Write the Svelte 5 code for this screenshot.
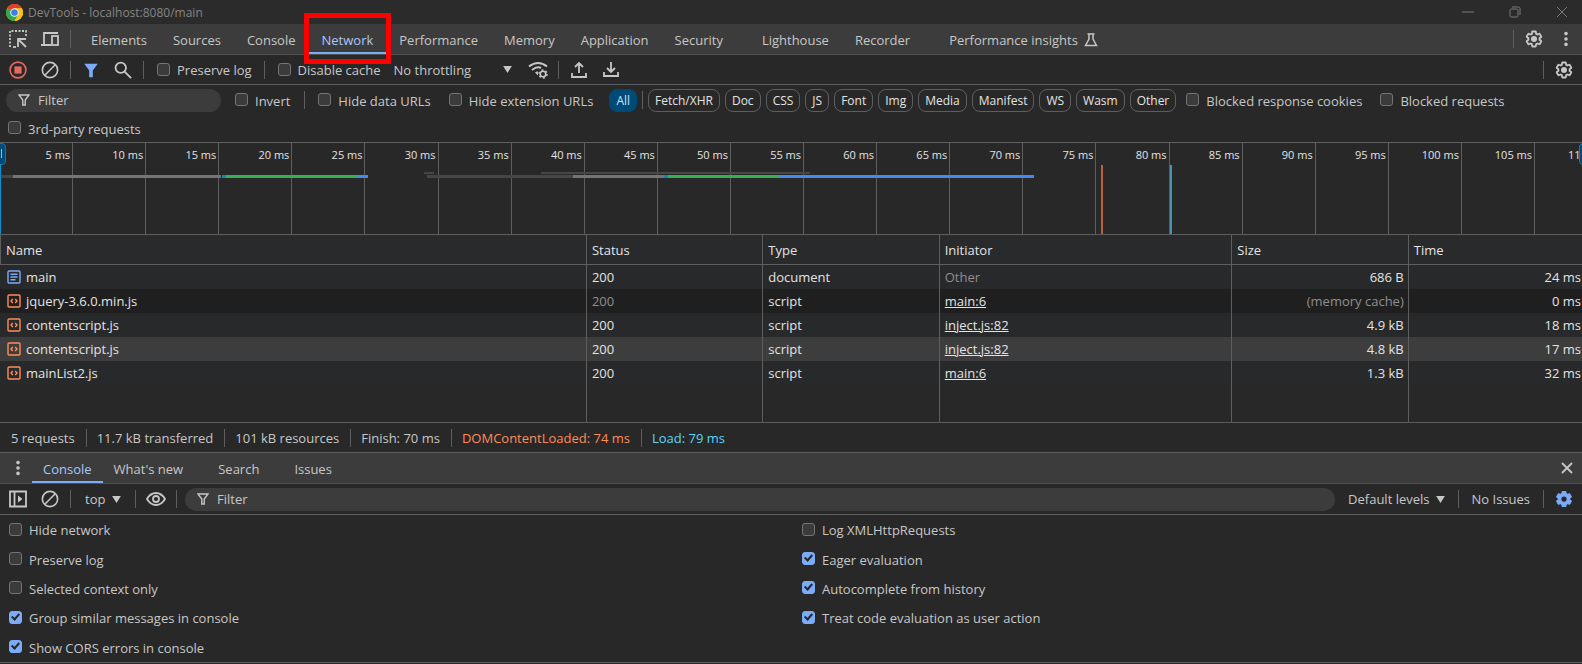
<script lang="ts">
  const tabs = ['Elements', 'Sources', 'Console', 'Network', 'Performance', 'Memory', 'Application', 'Security'];
  const extraTabs = ['Lighthouse', 'Recorder', 'Performance insights'];
  const types = ['Fetch/XHR', 'Doc', 'CSS', 'JS', 'Font', 'Img', 'Media', 'Manifest', 'WS', 'Wasm', 'Other'];
  const drawerTabs = ["What's new", 'Search', 'Issues'];

  let activeTab = $state('Network');
  let activeType = $state('All');
  let selectedRow = $state(3);

  const requests = [
    { name: 'main', status: 200, type: 'document', initiator: 'Other', size: '686 B', time: '24 ms' },
    { name: 'jquery-3.6.0.min.js', status: 200, type: 'script', initiator: 'main:6', size: '(memory cache)', time: '0 ms', cached: true },
    { name: 'contentscript.js', status: 200, type: 'script', initiator: 'inject.js:82', size: '4.9 kB', time: '18 ms' },
    { name: 'contentscript.js', status: 200, type: 'script', initiator: 'inject.js:82', size: '4.8 kB', time: '17 ms' },
    { name: 'mainList2.js', status: 200, type: 'script', initiator: 'main:6', size: '1.3 kB', time: '32 ms' }
  ];

  // Overview timeline, all values in ms
  const visibleSpan = 108.2;
  const ticks = Array.from({ length: 22 }, (_, i) => (i + 1) * 5);
  const bars = [
    { from: 0, to: 0.9, kind: 'queue' },
    { from: 0.9, to: 15.1, kind: 'stalled' },
    { from: 15.15, to: 15.45, kind: 'request' },
    { from: 15.45, to: 24.4, kind: 'waiting' },
    { from: 24.4, to: 25.2, kind: 'download' },
    { from: 29, to: 29.7, kind: 'queue', upper: true },
    { from: 29.2, to: 39.2, kind: 'queue' },
    { from: 37, to: 55.4, kind: 'queue', upper: true },
    { from: 39.2, to: 45.4, kind: 'stalled' },
    { from: 45.4, to: 45.7, kind: 'request' },
    { from: 45.7, to: 53.3, kind: 'waiting' },
    { from: 53.3, to: 70.7, kind: 'download' }
  ];
  const markers = [
    { at: 75.3, kind: 'dom' },
    { at: 80, kind: 'load' }
  ];
  const pct = (ms: number) => (ms / visibleSpan) * 100;

  const leftSettings = [
    { label: 'Hide network', on: false },
    { label: 'Preserve log', on: false },
    { label: 'Selected context only', on: false },
    { label: 'Group similar messages in console', on: true },
    { label: 'Show CORS errors in console', on: true }
  ];
  const rightSettings = [
    { label: 'Log XMLHttpRequests', on: false },
    { label: 'Eager evaluation', on: true },
    { label: 'Autocomplete from history', on: true },
    { label: 'Treat code evaluation as user action', on: true }
  ];

  const gearPath =
    'M19.43 12.98c.04-.32.07-.64.07-.98 0-.34-.03-.66-.07-.98l2.11-1.65c.19-.15.24-.42.12-.64l-2-3.46c-.09-.16-.26-.25-.44-.25-.06 0-.12.01-.17.03l-2.49 1c-.52-.4-1.08-.73-1.69-.98l-.38-2.65C14.46 2.18 14.25 2 14 2h-4c-.25 0-.46.18-.49.42l-.38 2.65c-.61.25-1.17.59-1.69.98l-2.49-1c-.06-.02-.12-.03-.18-.03-.17 0-.34.09-.43.25l-2 3.46c-.13.22-.07.49.12.64l2.11 1.65c-.04.32-.07.65-.07.98 0 .33.03.66.07.98l-2.11 1.65c-.19.15-.24.42-.12.64l2 3.46c.09.16.26.25.44.25.06 0 .12-.01.17-.03l2.49-1c.52.4 1.08.73 1.69.98l.38 2.65c.03.24.24.42.49.42h4c.25 0 .46-.18.49-.42l.38-2.65c.61-.25 1.17-.59 1.69-.98l2.49 1c.06.02.12.03.18.03.17 0 .34-.09.43-.25l2-3.46c.12-.22.07-.49-.12-.64l-2.11-1.65z';
</script>

{#snippet gear()}
  <svg class="icon" viewBox="0 0 24 24">
    <path d={gearPath} fill="none" stroke="currentColor" stroke-width="2.4" />
    <circle cx="12" cy="12" r="4" fill="currentColor" />
  </svg>
{/snippet}

{#snippet dots()}
  <svg class="icon" viewBox="0 0 20 20">
    <g fill="currentColor">
      <circle cx="10" cy="4" r="2" /><circle cx="10" cy="10" r="2" /><circle cx="10" cy="16" r="2" />
    </g>
  </svg>
{/snippet}

{#snippet clearIcon()}
  <svg class="icon" viewBox="0 0 20 20">
    <g fill="none" stroke="currentColor" stroke-width="1.8">
      <circle cx="10" cy="10" r="8.5" /><path d="M4.5 15.5 15.5 4.5" />
    </g>
  </svg>
{/snippet}

{#snippet funnel()}
  <svg class="funnel" viewBox="0 0 12 12">
    <path d="M1 1h10L7.2 6v5H4.8V6z" fill="none" stroke="currentColor" stroke-width="1.4" />
  </svg>
{/snippet}

{#snippet arrow()}
  <svg class="arrow" viewBox="0 0 10 8"><path d="M0 0h10L5 8z" fill="currentColor" /></svg>
{/snippet}

{#snippet check(label: string, on: boolean = false)}
  <label class="check"><input type="checkbox" checked={on} />{label}</label>
{/snippet}

<div class="devtools">
  <header class="titlebar">
    <svg class="logo" viewBox="0 0 48 48">
      <circle cx="24" cy="24" r="24" fill="#fbc116" />
      <path d="M24 24 3.2 12A24 24 0 0 1 44.8 12H24z" fill="#e33b2e" />
      <path d="M3.2 12A24 24 0 0 0 24 48L34.4 30 24 24z" fill="#2da94f" />
      <path d="M44.8 12A24 24 0 0 1 24 48L34.4 30 24 12z" fill="#fbc116" />
      <circle cx="24" cy="24" r="12" fill="#fff" />
      <circle cx="24" cy="24" r="9.5" fill="#3f7de8" />
    </svg>
    <span class="title">DevTools - localhost:8080/main</span>
    <div class="window-controls">
      <button aria-label="Minimize"><svg viewBox="0 0 12 12"><path d="M0 6h12" /></svg></button>
      <button aria-label="Restore">
        <svg viewBox="0 0 12 12"><rect x="1" y="3" width="8" height="8" rx="1.5" /><path d="M3 1h6.5Q11 1 11 2.5V9" /></svg>
      </button>
      <button aria-label="Close"><svg viewBox="0 0 12 12"><path d="m1 1 10 10M11 1 1 11" /></svg></button>
    </div>
  </header>

  <nav class="tabbar">
    <button class="tool" aria-label="Inspect element">
      <svg class="icon" viewBox="0 0 18 18">
        <g fill="none" stroke="currentColor" stroke-width="1.8">
          <path d="M1 17V1h16v6" stroke-dasharray="2 1.5" />
          <path d="M4 17h3" />
          <path d="M9 17V9h8M9 9l8 8" />
        </g>
      </svg>
    </button>
    <button class="tool" aria-label="Toggle device toolbar">
      <svg class="icon wide" viewBox="0 0 20 18">
        <g fill="none" stroke="currentColor" stroke-width="1.8">
          <path d="M18 3H4v11M1 15h10" /><rect x="12" y="6" width="6" height="9" />
        </g>
      </svg>
    </button>
    <span class="divider"></span>
    <div class="tabs">
      {#each tabs as tab}
        <button class="tab" class:active={tab === activeTab} onclick={() => (activeTab = tab)}>
          {tab}
          {#if tab === 'Network'}<span class="highlight"></span>{/if}
        </button>
      {/each}
      {#each extraTabs as tab}
        <button class="tab" class:spaced={tab !== 'Recorder'} class:active={tab === activeTab} onclick={() => (activeTab = tab)}>
          {tab}
          {#if tab === 'Performance insights'}
            <svg class="flask" viewBox="0 0 14 14">
              <path d="M3.5 1h7M5 1v5L1.5 12.5h11L9 6V1" fill="none" stroke="currentColor" stroke-width="1.5" />
            </svg>
          {/if}
        </button>
      {/each}
    </div>
    <span class="divider"></span>
    <button class="tool" aria-label="Settings">{@render gear()}</button>
    <button class="tool" aria-label="More options">{@render dots()}</button>
  </nav>

  <div class="toolbar">
    <button class="tool record" aria-label="Stop recording">
      <svg class="icon" viewBox="0 0 20 20">
        <circle cx="10" cy="10" r="8.8" fill="none" stroke="currentColor" stroke-width="1.8" />
        <rect x="6" y="6" width="8" height="8" fill="currentColor" />
      </svg>
    </button>
    <button class="tool" aria-label="Clear">{@render clearIcon()}</button>
    <span class="divider"></span>
    <button class="tool blue" aria-label="Filter">
      <svg class="icon" viewBox="0 0 20 20"><path d="M2.5 3h15L12 10.5V18H8v-7.5z" fill="currentColor" /></svg>
    </button>
    <button class="tool" aria-label="Search">
      <svg class="icon" viewBox="0 0 20 20">
        <g fill="none" stroke="currentColor" stroke-width="2">
          <circle cx="7.5" cy="7.5" r="5.8" /><path d="m11.5 11.5 7.5 7.5" />
        </g>
      </svg>
    </button>
    <span class="divider"></span>
    {@render check('Preserve log')}
    <span class="divider"></span>
    {@render check('Disable cache')}
    <span class="select throttling">
      <select aria-label="Throttling"><option>No throttling</option></select>
      {@render arrow()}
    </span>
    <button class="tool" aria-label="Network conditions">
      <svg class="icon wide" viewBox="0 0 20 18">
        <g fill="none" stroke="currentColor" stroke-width="2">
          <path d="M1 5.5Q10-1.5 19 5.5M4 9Q9 5 13 7" />
        </g>
        <path d="M7 11.5q1.5-1.5 3-1v4z" fill="currentColor" />
        <circle cx="15" cy="13" r="2.8" fill="none" stroke="currentColor" stroke-width="1.6" />
        <circle cx="15" cy="13" r="4" fill="none" stroke="currentColor" stroke-width="1.4" stroke-dasharray="2 2.19" />
      </svg>
    </button>
    <span class="divider"></span>
    <button class="tool" aria-label="Import HAR">
      <svg class="icon" viewBox="0 0 18 18">
        <path d="M9 12V2M5 6l4-4 4 4M2 12v4h14v-4" fill="none" stroke="currentColor" stroke-width="1.8" />
      </svg>
    </button>
    <button class="tool" aria-label="Export HAR">
      <svg class="icon" viewBox="0 0 18 18">
        <path d="M9 1v10M5 7l4 4 4-4M2 11v4h14v-4" fill="none" stroke="currentColor" stroke-width="1.8" />
      </svg>
    </button>
    <span class="spacer"></span>
    <span class="divider"></span>
    <button class="tool" aria-label="Network settings">{@render gear()}</button>
  </div>

  <div class="filterbar">
    <label class="filter">{@render funnel()}<input type="text" placeholder="Filter" aria-label="Filter requests" /></label>
    {@render check('Invert')}
    <span class="divider"></span>
    {@render check('Hide data URLs')}
    {@render check('Hide extension URLs')}
    <div class="chips">
      <button class="chip" class:on={activeType === 'All'} onclick={() => (activeType = 'All')}>All</button>
      <span class="divider"></span>
      {#each types as type}
        <button class="chip" class:on={activeType === type} onclick={() => (activeType = type)}>{type}</button>
      {/each}
    </div>
    {@render check('Blocked response cookies')}
    {@render check('Blocked requests')}
    {@render check('3rd-party requests')}
  </div>

  <div class="overview">
    {#each ticks as tick}
      <span class="tick" style="width: {pct(5)}%">{tick} ms</span>
    {/each}
    {#each bars as bar}
      <span class="bar {bar.kind}" class:upper={bar.upper} style="left: {pct(bar.from)}%; width: {pct(bar.to - bar.from)}%"></span>
    {/each}
    {#each markers as marker}
      <span class="marker {marker.kind}" style="left: {pct(marker.at)}%"></span>
    {/each}
    <span class="handle left"></span>
    <span class="handle right"></span>
  </div>

  <table>
    <colgroup>
      <col class="c-name" /><col class="c-status" /><col class="c-type" /><col class="c-initiator" /><col class="c-size" /><col />
    </colgroup>
    <thead>
      <tr><th>Name</th><th>Status</th><th>Type</th><th>Initiator</th><th>Size</th><th>Time</th></tr>
    </thead>
    <tbody>
      {#each requests as request, i}
        <tr class:selected={i === selectedRow} onclick={() => (selectedRow = i)}>
          <td>
            <div class="name">
              {#if request.type === 'document'}
                <svg class="file doc" viewBox="0 0 14 14">
                  <rect x="1" y="1" width="12" height="12" rx="1" />
                  <path d="M3.5 4.2h7M3.5 7h7M3.5 9.8h5" />
                </svg>
              {:else}
                <svg class="file script" viewBox="0 0 14 14">
                  <rect x="1" y="1" width="12" height="12" rx="1" />
                  <path d="M5.8 5 4 7l1.8 2M8.2 5 10 7 8.2 9" />
                </svg>
              {/if}
              {request.name}
            </div>
          </td>
          <td class:dim={request.cached}>{request.status}</td>
          <td>{request.type}</td>
          <td class:dim={request.initiator === 'Other'}>
            {#if request.initiator === 'Other'}Other{:else}<a href="#{request.initiator}">{request.initiator}</a>{/if}
          </td>
          <td class="num" class:dim={request.cached}>{request.size}</td>
          <td class="num last">{request.time}</td>
        </tr>
      {/each}
      <tr class="filler"><td></td><td></td><td></td><td></td><td></td><td></td></tr>
    </tbody>
  </table>

  <div class="summary">
    <span>5 requests</span>
    <span>11.7 kB transferred</span>
    <span>101 kB resources</span>
    <span>Finish: 70 ms</span>
    <span class="dom">DOMContentLoaded: 74 ms</span>
    <span class="load">Load: 79 ms</span>
  </div>

  <nav class="tabbar drawer">
    <button class="tool" aria-label="More tools">{@render dots()}</button>
    <div class="tabs">
      <button class="tab active">Console</button>
      {#each drawerTabs as tab}
        <button class="tab" class:spaced={tab !== "What's new"}>{tab}</button>
      {/each}
    </div>
    <button class="tool" aria-label="Close drawer">
      <svg class="icon" viewBox="0 0 18 18"><path d="m4 4 10 10M14 4 4 14" fill="none" stroke="currentColor" stroke-width="1.8" /></svg>
    </button>
  </nav>

  <div class="toolbar console">
    <button class="tool" aria-label="Show console sidebar">
      <svg class="icon" viewBox="0 0 18 18">
        <path d="M1 1.5h16v15H1zM5.5 1.5v15" fill="none" stroke="currentColor" stroke-width="1.8" />
        <path d="M9 5.5 13.5 9 9 12.5z" fill="currentColor" />
      </svg>
    </button>
    <button class="tool" aria-label="Clear console">{@render clearIcon()}</button>
    <span class="divider"></span>
    <span class="select context">
      <select aria-label="JavaScript context"><option>top</option></select>
      {@render arrow()}
    </span>
    <span class="divider"></span>
    <button class="tool" aria-label="Create live expression">
      <svg class="icon wide" viewBox="0 0 20 18">
        <path d="M1 9q3.5-6 9-6t9 6q-3.5 6-9 6T1 9z" fill="none" stroke="currentColor" stroke-width="1.8" />
        <circle cx="10" cy="9" r="3" fill="none" stroke="currentColor" stroke-width="1.8" />
      </svg>
    </button>
    <span class="divider"></span>
    <label class="filter">{@render funnel()}<input type="text" placeholder="Filter" aria-label="Filter messages" /></label>
    <button class="text-button">Default levels {@render arrow()}</button>
    <span class="divider"></span>
    <button class="text-button">No Issues</button>
    <span class="divider"></span>
    <button class="tool blue" aria-label="Console settings">
      <svg class="icon" viewBox="0 0 24 24">
        <path d={gearPath} fill="currentColor" stroke="currentColor" stroke-width="1.5" />
        <circle cx="12" cy="12" r="3.5" fill="#282828" />
      </svg>
    </button>
  </div>

  <div class="settings">
    <div class="column">
      {#each leftSettings as setting}
        {@render check(setting.label, setting.on)}
      {/each}
    </div>
    <div class="column">
      {#each rightSettings as setting}
        {@render check(setting.label, setting.on)}
      {/each}
    </div>
  </div>
</div>

<style>
  :global(body) {
    margin: 0;
    background: #282828;
  }

  .devtools {
    font-family: 'Open Sans', 'Noto Sans', sans-serif;
    font-size: 13px;
    line-height: 20px;
    color: #c7c7c7;
    background: #282828;
    min-height: 100vh;
    overflow: hidden;
    box-sizing: border-box;
  }

  button,
  input,
  select {
    font: inherit;
    color: inherit;
    background: none;
    border: 0;
    padding: 0;
    margin: 0;
  }

  .titlebar {
    display: flex;
    align-items: center;
    height: 24px;
    padding: 0 6px;
    background: #2b2b2b;
    color: #858585;
    font-size: 12px;
  }

  .logo {
    width: 17px;
    height: 17px;
    margin-right: 5px;
  }

  .title {
    padding-top: 1px;
  }

  .window-controls {
    display: flex;
    margin-left: auto;
  }

  .window-controls button {
    display: flex;
    justify-content: center;
    width: 28px;
    margin-left: 19px;
  }

  .window-controls svg {
    width: 12px;
    height: 12px;
    fill: none;
    stroke: #7a7a7a;
    stroke-width: 1;
  }

  .tabbar {
    display: flex;
    align-items: center;
    height: 30px;
    padding: 0 0 0 2px;
    background: #3c3c3c;
    border-bottom: 1px solid #4e4e4e;
  }

  .tool {
    display: flex;
    align-items: center;
    justify-content: center;
    flex: none;
    width: 32px;
    height: 26px;
  }

  .icon {
    width: 18px;
    height: 18px;
  }

  .icon.wide {
    width: 20px;
  }

  .blue {
    color: #7cacf8;
  }

  .record {
    color: #e46962;
  }

  .divider {
    flex: none;
    width: 1px;
    height: 18px;
    margin: 0 4px;
    background: #5e5e5e;
  }

  .tabs {
    display: flex;
    flex: 1;
    align-self: stretch;
    padding-left: 3px;
  }

  .tab {
    position: relative;
    display: flex;
    align-items: center;
    gap: 6px;
    padding: 1px 13px 0;
    white-space: nowrap;
  }

  .tab.active {
    color: #a8c7fa;
    box-shadow: inset 0 -2px #7cacf8;
  }

  .tab.spaced {
    margin-left: 13px;
  }

  .highlight {
    position: absolute;
    inset: -11px -5px -10px -5px;
    border: 5px solid #f00;
    z-index: 1;
  }

  .flask {
    width: 14px;
    height: 14px;
  }

  .toolbar {
    display: flex;
    align-items: center;
    height: 29px;
    padding: 0 2px;
    border-bottom: 1px solid #5e5e5e;
  }

  .spacer {
    flex: 1;
  }

  .check {
    display: flex;
    align-items: center;
    gap: 7px;
    padding-top: 1px;
    white-space: nowrap;
  }

  .check input {
    appearance: none;
    position: relative;
    flex: none;
    box-sizing: border-box;
    width: 13px;
    height: 13px;
    margin-bottom: 2px;
    border: 1px solid #757575;
    border-radius: 3px;
    background: #3b3b3b;
  }

  .check input:checked {
    border-color: #7cacf8;
    background: #7cacf8;
  }

  .check input:checked::after {
    content: '';
    position: absolute;
    left: 3px;
    top: 0;
    width: 3px;
    height: 6px;
    border: solid #282828;
    border-width: 0 2px 2px 0;
    transform: rotate(42deg);
  }

  .toolbar .check {
    margin: 0 8px 0 9px;
  }

  .select {
    display: flex;
    align-items: center;
    gap: 6px;
  }

  .select select {
    appearance: none;
  }

  .throttling {
    justify-content: space-between;
    width: 118px;
    margin: 0 10px 0 5px;
  }

  .context {
    margin: 0 10px;
  }

  .arrow {
    width: 9px;
    height: 7px;
  }

  .filterbar {
    display: flex;
    flex-wrap: wrap;
    align-items: center;
    row-gap: 4px;
    padding: 3px 4px 2px;
    border-bottom: 1px solid #5e5e5e;
  }

  .filterbar .check {
    box-sizing: border-box;
    height: 24px;
    margin: 0 14px 0 4px;
  }

  .filterbar > .divider {
    margin: 0 9px 0 0;
  }

  .filter {
    display: flex;
    align-items: center;
    gap: 8px;
    box-sizing: border-box;
    height: 23px;
    padding: 0 12px;
    border-radius: 12px;
    background: #3c3c3c;
  }

  .filter input {
    flex: 1;
    min-width: 0;
    outline: none;
  }

  .filter input::placeholder {
    color: #c7c7c7;
    opacity: 1;
  }

  .filterbar .filter {
    width: 215px;
    margin: 0 10px 0 2px;
  }

  .funnel {
    flex: none;
    width: 12px;
    height: 12px;
  }

  .chips {
    display: flex;
    align-items: center;
    gap: 5px;
    margin: 0 6px 0 2px;
  }

  .chips .divider {
    margin: 0;
  }

  .chip {
    height: 23px;
    padding: 1px 6px 0;
    border: 1px solid #5e5e5e;
    border-radius: 8px;
    color: #e3e3e3;
    font-size: 12px;
    line-height: 20px;
  }

  .chip.on {
    border-color: #004a77;
    background: #004a77;
    color: #c2e7ff;
  }

  .overview {
    position: relative;
    display: flex;
    height: 91px;
    overflow: hidden;
    border-bottom: 1px solid #5e5e5e;
  }

  .tick {
    flex: none;
    box-sizing: border-box;
    padding: 3px 2px 0 0;
    border-right: 1px solid #5e5e5e;
    color: #e3e3e3;
    font-size: 11px;
    line-height: 18px;
    text-align: right;
  }

  .bar {
    position: absolute;
    top: 32px;
    height: 3px;
  }

  .bar.upper {
    top: 29px;
    height: 2px;
  }

  .queue {
    background: #444746;
  }

  .stalled {
    background: #757575;
  }

  .request {
    background: #0b8bb0;
  }

  .waiting {
    background: #34b155;
  }

  .download {
    background: #4688ee;
  }

  .marker {
    position: absolute;
    top: 22px;
    bottom: 0;
    width: 2px;
  }

  .marker.dom {
    background: #b9623e;
  }

  .marker.load {
    background: #4a93ae;
  }

  .handle {
    position: absolute;
    top: 0;
    width: 5px;
    height: 20px;
    border: 1px solid #0b7bb5;
    background: #004a77;
  }

  .handle.left {
    left: -1px;
    border-radius: 0 4px 4px 0;
  }

  .handle.left::before {
    content: '';
    position: absolute;
    left: 1px;
    top: 5px;
    width: 1px;
    height: 9px;
    background: #7cc4f0;
  }

  .handle.left::after {
    content: '';
    position: absolute;
    left: 0;
    top: 20px;
    width: 1px;
    height: 71px;
    background: #0b8fd0;
  }

  .handle.right {
    right: -4px;
    border-radius: 4px 0 0 4px;
  }

  table {
    width: 100%;
    table-layout: fixed;
    border-collapse: separate;
    border-spacing: 0;
    color: #e3e3e3;
    border-bottom: 1px solid #5e5e5e;
  }

  .c-name {
    width: 37.1%;
  }

  .c-status,
  .c-type,
  .c-size {
    width: 11.15%;
  }

  .c-initiator {
    width: 18.5%;
  }

  th,
  td {
    box-sizing: border-box;
    height: 24px;
    padding: 0 4px 0 5px;
    border-right: 1px solid #5e5e5e;
    text-align: left;
    font-weight: 400;
    white-space: nowrap;
  }

  th {
    height: 30px;
    padding-top: 1px;
    border-bottom: 1px solid #5e5e5e;
    background: #282a2c;
  }

  th:first-child {
    border-left: 1px solid #5e5e5e;
  }

  th:last-child,
  td:last-child {
    border-right: 0;
  }

  tbody tr:nth-child(odd) {
    background: #28292a;
  }

  tbody tr:nth-child(even) {
    background: #1f1f1f;
  }

  tbody tr.selected {
    background: #3d3d3d;
  }

  tbody tr.filler {
    background: #282828;
  }

  .filler td {
    height: 37px;
  }

  .name {
    display: flex;
    align-items: center;
    gap: 5px;
    padding-left: 2px;
  }

  .file {
    width: 14px;
    height: 14px;
    fill: none;
    stroke-width: 1.4;
  }

  .file.doc {
    stroke: #7cacf8;
  }

  .file.script {
    stroke: #fe8d59;
  }

  td a {
    color: inherit;
  }

  td.num {
    text-align: right;
  }

  td.last {
    padding-right: 1px;
  }

  td.dim {
    color: #8f8f8f;
  }

  .summary {
    display: flex;
    align-items: center;
    height: 29px;
    padding-left: 1px;
    border-bottom: 1px solid #5e5e5e;
  }

  .summary span {
    padding: 0 11px 0 10px;
    line-height: 18px;
    border-right: 1px solid #5e5e5e;
  }

  .summary span:last-child {
    border-right: 0;
  }

  .summary .dom {
    color: #fe8d59;
  }

  .summary .load {
    color: #5cd5fb;
  }

  .drawer {
    padding: 0 1px 0 4px;
  }

  .drawer .tool {
    width: 28px;
  }

  .drawer .tabs {
    padding-left: 0;
  }

  .drawer .tab {
    padding: 1px 11px 0;
  }

  .console {
    height: 30px;
  }

  .console .filter {
    flex: 1;
    margin: 0 4px;
  }

  .text-button {
    display: flex;
    align-items: center;
    gap: 6px;
    padding: 0 9px;
    white-space: nowrap;
  }

  .settings {
    display: flex;
    gap: 4px;
    border-bottom: 1px solid #5e5e5e;
  }

  .column {
    display: grid;
    grid-template-rows: repeat(5, 1fr);
    flex: 1;
    min-height: 147px;
    padding-left: 9px;
  }
</style>
